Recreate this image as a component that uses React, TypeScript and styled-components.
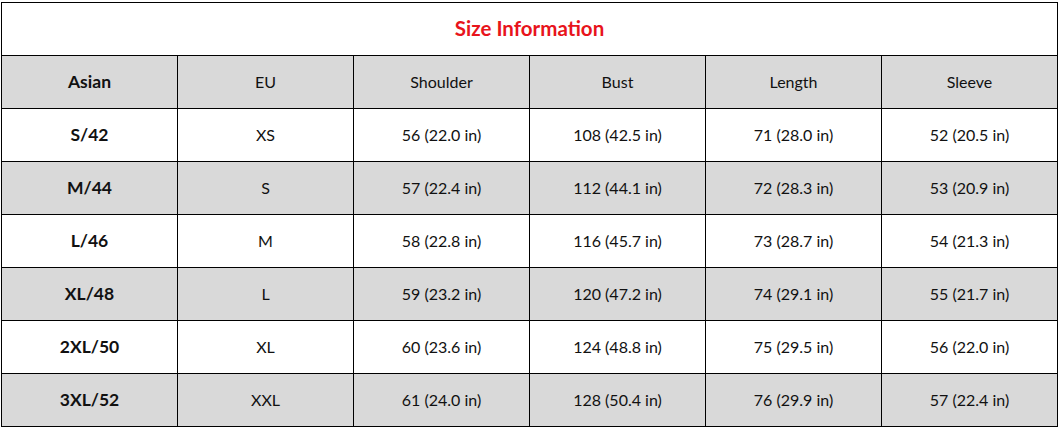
import React from "react";
import styled, { createGlobalStyle } from "styled-components";

const Global = createGlobalStyle`
  html, body { margin: 0; padding: 0; background: #ffffff; }
  body { font-family: Lato, "Open Sans", "Liberation Sans", sans-serif; }
`;

const Page = styled.div`
  padding: 2px 0 0 1px;
`;

const Table = styled.table`
  border-collapse: collapse;
  table-layout: fixed;
  width: 1057px;
`;

const Col = styled.col`
  width: 176px;
`;

const Row = styled.tr<{ $shade?: boolean }>`
  height: 53px;
  background: ${(p) => (p.$shade ? "#d9d9d9" : "#ffffff")};
`;

const Cell = styled.td<{ $bold?: boolean }>`
  border: 1px solid #000;
  padding: 0 0 2px;
  text-align: center;
  vertical-align: middle;
  color: #111111;
  font-size: ${(p) => (p.$bold ? "17.5px" : "16px")};
  font-weight: ${(p) => (p.$bold ? 700 : 400)};
`;

const Title = styled.td`
  border: 1px solid #000;
  padding: 0 0 2px;
  text-align: center;
  vertical-align: middle;
  color: #e8141c;
  font-size: 20.5px;
  font-weight: 700;
`;

const headers = ["EU", "Shoulder", "Bust", "Length", "Sleeve"];

const rows: string[][] = [
  ["S/42", "XS", "56 (22.0 in)", "108 (42.5 in)", "71 (28.0 in)", "52 (20.5 in)"],
  ["M/44", "S", "57 (22.4 in)", "112 (44.1 in)", "72 (28.3 in)", "53 (20.9 in)"],
  ["L/46", "M", "58 (22.8 in)", "116 (45.7 in)", "73 (28.7 in)", "54 (21.3 in)"],
  ["XL/48", "L", "59 (23.2 in)", "120 (47.2 in)", "74 (29.1 in)", "55 (21.7 in)"],
  ["2XL/50", "XL", "60 (23.6 in)", "124 (48.8 in)", "75 (29.5 in)", "56 (22.0 in)"],
  ["3XL/52", "XXL", "61 (24.0 in)", "128 (50.4 in)", "76 (29.9 in)", "57 (22.4 in)"],
];

export default function App() {
  return (
    <Page>
      <Global />
      <Table>
        <colgroup>
          {Array.from({ length: 6 }).map((_, i) => (
            <Col key={i} />
          ))}
        </colgroup>
        <tbody>
          <Row>
            <Title colSpan={6}>Size Information</Title>
          </Row>
          <Row $shade>
            <Cell $bold>Asian</Cell>
            {headers.map((h) => (
              <Cell key={h}>{h}</Cell>
            ))}
          </Row>
          {rows.map((r, i) => (
            <Row key={r[0]} $shade={i % 2 === 1}>
              {r.map((c, j) => (
                <Cell key={j} $bold={j === 0}>
                  {c}
                </Cell>
              ))}
            </Row>
          ))}
        </tbody>
      </Table>
    </Page>
  );
}
